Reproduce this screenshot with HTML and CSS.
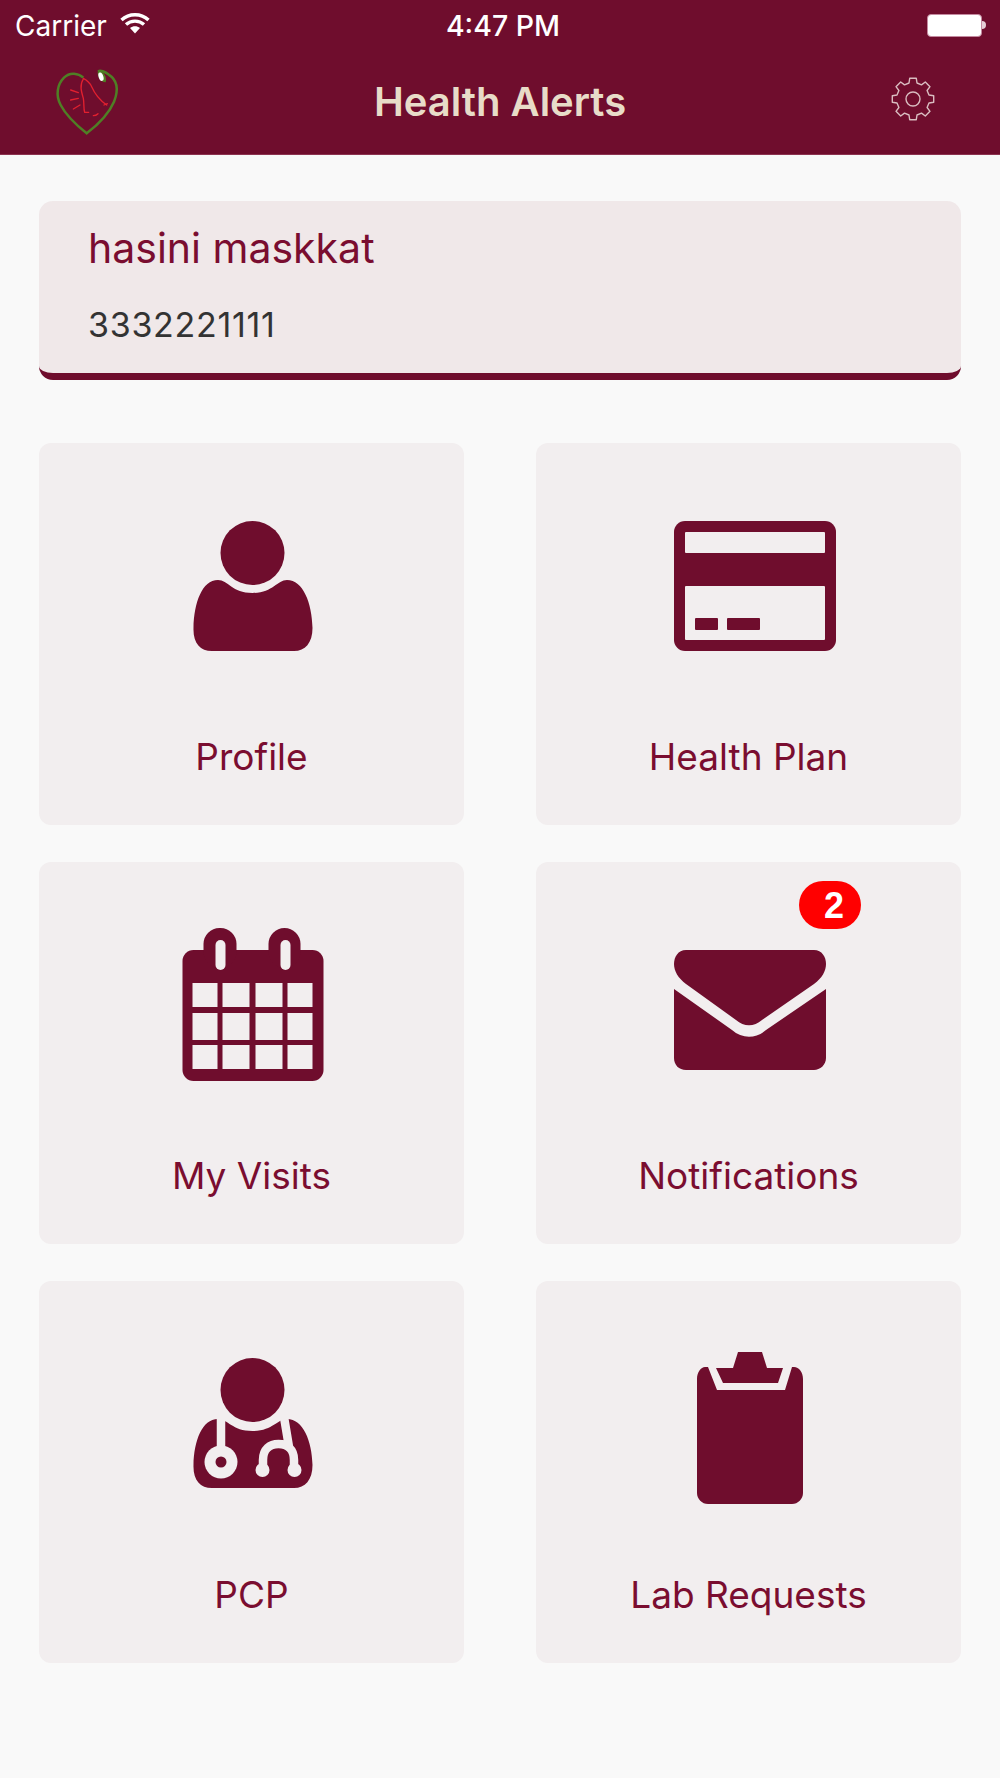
FILE: index.html
```html
<!DOCTYPE html>
<html lang="en">
<head>
  <meta charset="UTF-8" />
  <meta name="viewport" content="width=device-width, initial-scale=1.0"/>
  <title>Health Alerts</title>
  <link rel="stylesheet" href="styles.css">
</head>
<body>
  <header class="header">
    <div class="status-bar">
      <div class="status-left">
        <span class="carrier">Carrier</span>
        <svg class="wifi" viewBox="0 0 30 22">
          <path d="M1.5 8 C9 1 21 1 28.5 8" />
          <path d="M6 12.5 C11 8 19 8 24 12.5" />
          <path class="wifi-dot" d="M10 16 C13 13.5 17 13.5 20 16 L15 21.5 Z" />
        </svg>
      </div>
      <div class="status-time">4:47 PM</div>
      <div class="status-right">
        <div class="battery"></div>
        <div class="battery-nub"></div>
      </div>
    </div>
    <nav class="nav">
      <div class="nav-left">
        <svg class="logo" viewBox="0 0 270 270">
          <path class="logo-heart" d="M130 68 C115 55 90 50 72 68 C52 88 46 120 62 150 C80 185 115 215 140 235 C170 212 205 180 222 140 C236 105 232 75 205 58 C195 50 180 44 175 50" />
          <path class="logo-leaf" d="M174 46 C170 62 180 82 197 82 C202 70 192 48 174 46Z" />
          <ellipse class="logo-seed" cx="183" cy="65" rx="7" ry="13" transform="rotate(-18 183 65)" />
          <path class="logo-bell" d="M130 70 C140 75 148 80 155 95 C165 118 175 132 200 150 M130 72 C118 90 124 110 130 130 C133 145 130 160 134 172 L146 172 M160 182 C165 182 170 180 174 176 M192 150 L202 146" />
          <path class="logo-bell" d="M92 105 L115 113 M92 135 L115 130 M100 162 L120 150" />
        </svg>
      </div>
      <div class="nav-title">Health Alerts</div>
      <div class="nav-right">
        <svg class="gear" viewBox="-25 -25 50 50">
          <polygon points="-4,-16 -3.3,-20.7 3.3,-20.7 4,-16 8.5,-14.1 12.3,-17 17,-12.3 14.1,-8.5 16,-4 20.7,-3.3 20.7,3.3 16,4 14.1,8.5 17,12.3 12.3,17 8.5,14.1 4,16 3.3,20.7 -3.3,20.7 -4,16 -8.5,14.1 -12.3,17 -17,12.3 -14.1,8.5 -16,4 -20.7,3.3 -20.7,-3.3 -16,-4 -14.1,-8.5 -17,-12.3 -12.3,-17 -8.5,-14.1" />
          <circle cx="0" cy="0" r="7" />
        </svg>
      </div>
    </nav>
  </header>

  <main class="content">
    <section class="user-card">
      <div class="user-name">hasini maskkat</div>
      <div class="user-phone">3332221111</div>
    </section>

    <div class="grid">
      <a class="tile">
        <svg class="tile-icon" viewBox="0 0 180 170">
          <circle cx="90.5" cy="50" r="32" />
          <path d="M56 77 C66 77 70 90 90.5 90 C111 90 115 77 125 77 C141 77 150 100 150.5 125 C150.5 140 143 148 132 148 H50 C38 148 31 140 31.5 125 C32 100 40 77 56 77Z" />
        </svg>
        <span class="tile-label">Profile</span>
      </a>

      <a class="tile">
        <svg class="tile-icon" viewBox="0 0 180 170">
          <rect x="15" y="18" width="162" height="130" rx="11" />
          <rect class="cut" x="26" y="29" width="140" height="21" rx="1" />
          <rect class="cut" x="26" y="83" width="140" height="54" rx="1" />
          <rect x="36" y="115" width="23" height="12" rx="1" />
          <rect x="68" y="115" width="33" height="12" rx="1" />
        </svg>
        <span class="tile-label">Health Plan</span>
      </a>

      <a class="tile">
        <svg class="tile-icon" viewBox="0 0 180 170">
          <rect x="20.5" y="28" width="141" height="131" rx="11" />
          <rect x="41.5" y="6" width="33" height="40" rx="16" />
          <rect x="106.5" y="6" width="32" height="40" rx="16" />
          <rect class="cut" x="53.5" y="18" width="10" height="30" rx="5" />
          <rect class="cut" x="118.5" y="18" width="10" height="30" rx="5" />
          <g class="cut">
            <rect x="30.5" y="61" width="25" height="24" />
            <rect x="60.5" y="61" width="27" height="24" />
            <rect x="93.5" y="61" width="27" height="24" />
            <rect x="125.5" y="61" width="25" height="24" />
            <rect x="30.5" y="91" width="25" height="27" />
            <rect x="60.5" y="91" width="27" height="27" />
            <rect x="93.5" y="91" width="27" height="27" />
            <rect x="125.5" y="91" width="25" height="27" />
            <rect x="30.5" y="123" width="25" height="24" />
            <rect x="60.5" y="123" width="27" height="24" />
            <rect x="93.5" y="123" width="27" height="24" />
            <rect x="125.5" y="123" width="25" height="24" />
          </g>
        </svg>
        <span class="tile-label">My Visits</span>
      </a>

      <a class="tile">
        <span class="badge">2</span>
        <svg class="tile-icon" viewBox="0 0 180 170">
          <path d="M27 28 H155 C163 28 167 35 167 42 C167 49 163 56 155 62 L103 98 C95 105 85 105 77 98 L27 62 C19 56 15 49 15 42 C15 35 19 28 27 28Z" />
          <path d="M15 67 L73 108 C83 117 97 117 107 108 L167 67 V136 C167 143 161 148 155 148 H27 C20 148 15 143 15 136Z" />
        </svg>
        <span class="tile-label">Notifications</span>
      </a>

      <a class="tile">
        <svg class="tile-icon" viewBox="0 0 180 170">
          <circle cx="90.5" cy="49" r="32" />
          <path d="M56 78 C66 78 70 90 90.5 90 C111 90 115 78 125 78 C141 78 150 100 150.5 124 C150.5 139 143 147 132 147 H50 C38 147 31 139 31.5 124 C32 100 40 78 56 78Z" />
          <path class="tube" d="M59 76 V108 M122 76 L127 106 M101 126 V119 C101 108 108 103 116.5 103 C125 103 132 108 132 119 V126" />
          <circle class="cut" cx="59" cy="121" r="16.5" />
          <circle cx="59" cy="121" r="5.5" />
          <circle class="cut" cx="100.5" cy="129" r="7" />
          <circle class="cut" cx="132.5" cy="129" r="7" />
        </svg>
        <span class="tile-label">PCP</span>
      </a>

      <a class="tile">
        <svg class="tile-icon" viewBox="0 0 180 170">
          <path d="M38 38 C38 31 42 26 46 26 H49 L58 49 H126 L133 26 H135 C140 26 144 31 144 38 V152 C144 158 139 163 133 163 H49 C43 163 38 158 38 152Z" />
          <polygon points="79,11 103,11 108,27 124,27 119,42 64,42 57,27 74,27" />
        </svg>
        <span class="tile-label">Lab Requests</span>
      </a>
    </div>
  </main>
</body>
</html>
```

FILE: styles.css
```css
:root {
  --maroon: #6f0d2d;
  --tile-bg: #f2eeef;
}

* {
  box-sizing: border-box;
}

body {
  margin: 0;
  padding: 0;
  min-height: 100vh;
  background: #f9f9f9;
  font-family: Inter, "Noto Sans", sans-serif;
}

/* header */
.header {
  height: 155px;
  background: var(--maroon);
  border-bottom: 1px solid #8d3350;
}

.status-bar {
  height: 52px;
  display: grid;
  grid-template-columns: 1fr auto 1fr;
  align-items: center;
  color: #fff;
  font-size: 28px;
}

.status-left {
  display: flex;
  align-items: center;
  gap: 13px;
  padding-left: 15px;
}

.wifi {
  width: 30px;
  height: 22px;
  margin-top: -6px;
  fill: none;
  stroke: #fff;
  stroke-width: 3.4;
}

.wifi-dot {
  fill: #fff;
  stroke: none;
}

.status-time {
  font-weight: 500;
  font-size: 28.5px;
  margin: -2px 0 0 6px;
}

.status-right {
  display: flex;
  justify-content: flex-end;
  align-items: center;
  margin-top: -2px;
  padding-right: 14px;
}

.battery {
  width: 55px;
  height: 23px;
  background: #fff;
  border: 1px solid #c48aa0;
  border-radius: 4px;
}

.battery-nub {
  width: 4px;
  height: 8px;
  background: #e6cdd6;
  border-radius: 0 4px 4px 0;
}

.nav {
  height: 102px;
  display: grid;
  grid-template-columns: 1fr auto 1fr;
  padding: 3px 40px 0;
}

.logo {
  width: 90px;
  height: 90px;
  display: block;
}

.logo-heart {
  fill: none;
  stroke: #4f7f25;
  stroke-width: 7.5;
}

.logo-leaf {
  fill: #4f7f25;
}

.logo-seed {
  fill: #fff;
}

.logo-bell {
  fill: none;
  stroke: #e2202f;
  stroke-width: 4;
  stroke-linecap: round;
}

.nav-title {
  color: #e8dcc8;
  font-size: 40px;
  font-weight: 600;
  line-height: 44px;
  margin-top: 25px;
}

.nav-right {
  display: flex;
  justify-content: flex-end;
  padding-right: 22px;
}

.gear {
  width: 50px;
  height: 50px;
  margin-top: 19px;
  fill: none;
  stroke: #d9bcc0;
  stroke-width: 1.4;
  stroke-linejoin: round;
}

/* content */
.content {
  padding: 46px 39px 0;
}

.user-card {
  height: 179px;
  padding: 23px 49px 0;
  background: #f0e8e9;
  border-bottom: 7px solid var(--maroon);
  border-radius: 14px;
}

.user-name {
  color: #7a0d30;
  font-size: 41px;
  line-height: 48px;
}

.user-phone {
  color: #333;
  font-size: 34px;
  letter-spacing: 0.7px;
  line-height: 40px;
  margin-top: 33px;
}

.grid {
  display: grid;
  grid-template-columns: repeat(2, 1fr);
  grid-auto-rows: 382px;
  gap: 37px 72px;
  margin-top: 63px;
}

.tile {
  position: relative;
  display: flex;
  flex-direction: column;
  align-items: center;
  gap: 62px;
  padding-top: 60px;
  background: var(--tile-bg);
  border-radius: 12px;
}

.tile-icon {
  width: 180px;
  height: 170px;
  display: block;
  fill: var(--maroon);
}

.tile-icon .cut {
  fill: var(--tile-bg);
}

.tube {
  fill: none;
  stroke: var(--tile-bg);
  stroke-width: 8.5;
}

.tile-label {
  color: #7a0d30;
  font-size: 37px;
  line-height: 44px;
}

.badge {
  position: absolute;
  top: 19px;
  right: 100px;
  width: 62px;
  height: 48px;
  padding-left: 8px;
  background: #ff0000;
  border-radius: 24px;
  color: #fff;
  font-family: "Liberation Sans", sans-serif;
  font-size: 36px;
  font-weight: 700;
  line-height: 50px;
  text-align: center;
}
```
